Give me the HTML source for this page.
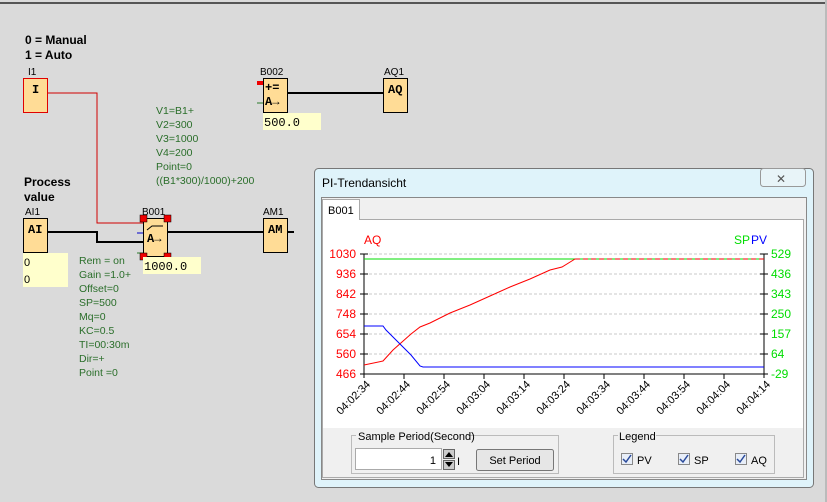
<!DOCTYPE html>
<html><head><style>
body{margin:0;width:827px;height:502px;overflow:hidden;background:#dadada;font-family:"Liberation Sans",sans-serif;}
svg{display:block}
</style></head><body>
<svg width="827" height="502" xmlns="http://www.w3.org/2000/svg" font-family="Liberation Sans, sans-serif">
<rect width="827" height="502" fill="#dadada"/>
<rect x="0" y="2" width="827" height="2" fill="#555"/>
<rect x="825" y="0" width="2" height="502" fill="#bbb"/>
<g font-weight="bold" font-size="12" fill="#000">
<text x="25" y="44">0 = Manual</text><text x="25" y="59">1 = Auto</text>
<text x="24" y="186">Process</text><text x="24" y="201">value</text>
</g>
<g font-size="10" fill="#000">
<text x="28" y="75">I1</text><text x="260" y="75">B002</text><text x="384" y="75">AQ1</text>
<text x="25" y="215">AI1</text><text x="142" y="215">B001</text><text x="263" y="215">AM1</text>
</g>
<polyline points="47,93 97,93 97,223 143,223" fill="none" stroke="#d00000" stroke-width="1"/>
<polyline points="47,232 97,232 97,242 143,242" fill="none" stroke="#000" stroke-width="2"/>
<line x1="167" y1="232" x2="263" y2="232" stroke="#000" stroke-width="2"/>
<line x1="287" y1="232" x2="294" y2="232" stroke="#000" stroke-width="2"/>
<line x1="287" y1="93" x2="383" y2="93" stroke="#000" stroke-width="2"/>
<line x1="257" y1="103" x2="263" y2="103" stroke="#2a7a2a"/>
<line x1="137" y1="233" x2="143" y2="233" stroke="#0000cc"/>
<line x1="137" y1="253" x2="143" y2="253" stroke="#2a7a2a"/>
<rect x="257" y="81" width="6" height="4" fill="#e00"/>
<g fill="#ffdc96" stroke="#000">
<rect x="23.5" y="78.5" width="24" height="34" stroke="#e00000"/>
<rect x="263.5" y="78.5" width="24" height="34"/>
<rect x="383.5" y="78.5" width="24" height="34"/>
<rect x="23.5" y="218.5" width="24" height="34"/>
<rect x="143.5" y="218.5" width="24" height="38"/>
<rect x="263.5" y="218.5" width="24" height="34"/>
</g>
<g fill="#e00" stroke="#000" stroke-width="0.5">
<rect x="140" y="215" width="7" height="7"/><rect x="164" y="215" width="7" height="7"/>
<rect x="140" y="253" width="7" height="7"/><rect x="164" y="253" width="7" height="7"/>
</g>
<g font-family="Liberation Mono, monospace" font-size="12" font-weight="bold" fill="#000">
<text x="32" y="93">I</text>
<text x="265" y="91">+=</text><text x="265" y="105">A→</text>
<text x="388" y="93">AQ</text>
<text x="28" y="233">AI</text>
<text x="147" y="242">A→</text>
<text x="268" y="233">AM</text>
</g>
<polyline points="147,230 152,226 158,226 163,226" fill="none" stroke="#000"/>
<g fill="#ffffcc"><rect x="263" y="113" width="58" height="17"/><rect x="23" y="253" width="45" height="34"/><rect x="143" y="257" width="58" height="17"/></g>
<g font-family="Liberation Mono, monospace" font-size="12" fill="#000">
<text x="264" y="126">500.0</text><text x="144" y="270">1000.0</text>
</g>
<g font-size="11" fill="#000"><text x="24" y="266">0</text><text x="24" y="283">0</text></g>
<g font-size="10.5" fill="#2a6e2a">
<text x="156" y="114">V1=B1+</text><text x="156" y="128">V2=300</text><text x="156" y="142">V3=1000</text>
<text x="156" y="156">V4=200</text><text x="156" y="170">Point=0</text><text x="156" y="184">((B1*300)/1000)+200</text>
<text x="79" y="264">Rem = on</text><text x="79" y="278">Gain  =1.0+</text><text x="79" y="292">Offset=0</text>
<text x="79" y="306">SP=500</text><text x="79" y="320">Mq=0</text><text x="79" y="334">KC=0.5</text>
<text x="79" y="348">TI=00:30m</text><text x="79" y="362">Dir=+</text><text x="79" y="376">Point =0</text>
</g>
<rect x="314.5" y="168.5" width="499" height="319" rx="4" fill="#dff3fa" stroke="#777"/>
<rect x="760.5" y="168.5" width="45" height="18" rx="3" fill="#e8f4f8" stroke="#999"/>
<text x="776" y="183" font-size="12" fill="#555">✕</text>
<text x="322" y="187" font-size="12" fill="#000">PI-Trendansicht</text>
<rect x="321.5" y="197.5" width="485" height="282" fill="#f0f0f0" stroke="#888"/>
<rect x="322.5" y="219.5" width="481" height="258" fill="#f0f0f0" stroke="#aaa"/>
<rect x="322.5" y="199.5" width="37" height="21" fill="#fff" stroke="#aaa"/>
<rect x="323" y="219" width="36" height="2" fill="#fff"/>
<text x="328" y="214" font-size="11" fill="#000">B001</text>
<rect x="323" y="220" width="480" height="208" fill="#fff"/>
<g stroke="#c8c8c8" stroke-dasharray="3,2">
<line x1="364" y1="254" x2="764" y2="254"/><line x1="364" y1="274" x2="764" y2="274"/>
<line x1="364" y1="294" x2="764" y2="294"/><line x1="364" y1="314" x2="764" y2="314"/>
<line x1="364" y1="334" x2="764" y2="334"/><line x1="364" y1="354" x2="764" y2="354"/>
</g>
<line x1="364" y1="254" x2="364" y2="378" stroke="#000"/>
<line x1="764" y1="254" x2="764" y2="378" stroke="#000"/>
<line x1="364" y1="374" x2="764" y2="374" stroke="#000"/>
<g stroke="#000">
<path d="M360 254h8M360 274h8M360 294h8M360 314h8M360 334h8M360 354h8M360 374h8M760 254h8M760 274h8M760 294h8M760 314h8M760 334h8M760 354h8M760 374h8"/>
<path d="M404 374v5M444 374v5M484 374v5M524 374v5M564 374v5M604 374v5M644 374v5M684 374v5M724 374v5"/>
</g>
<line x1="364" y1="259" x2="764" y2="259" stroke="#00dd00"/>
<line x1="575" y1="259" x2="764" y2="259" stroke="#e00" stroke-dasharray="5,3"/>
<polyline points="364,365 383,361 393,350 411,334 420,327 430,323 450,313 470,305 490,296 510,287 530,279 550,270 562,267 575,259" fill="none" stroke="#ff0000"/>
<polyline points="364,326 383,326 386,330 400,344 411,355 420,366 423,367 764,367" fill="none" stroke="#0000ff"/>
<g font-size="12" fill="#f00" text-anchor="end">
<text x="356" y="258">1030</text><text x="356" y="278">936</text><text x="356" y="298">842</text>
<text x="356" y="318">748</text><text x="356" y="338">654</text><text x="356" y="358">560</text><text x="356" y="378">466</text>
</g>
<text x="364" y="244" font-size="12" fill="#f00">AQ</text>
<g font-size="12" fill="#00dd00">
<text x="771" y="258">529</text><text x="771" y="278">436</text><text x="771" y="298">343</text>
<text x="771" y="318">250</text><text x="771" y="338">157</text><text x="771" y="358">64</text><text x="771" y="378">-29</text>
<text x="734" y="244">SP</text></g>
<text x="751" y="244" font-size="12" fill="#0000ff">PV</text>
<g font-size="11" fill="#000" text-anchor="end">
<text transform="translate(371,385) rotate(-45)">04:02:34</text>
<text transform="translate(411,385) rotate(-45)">04:02:44</text>
<text transform="translate(451,385) rotate(-45)">04:02:54</text>
<text transform="translate(491,385) rotate(-45)">04:03:04</text>
<text transform="translate(531,385) rotate(-45)">04:03:14</text>
<text transform="translate(571,385) rotate(-45)">04:03:24</text>
<text transform="translate(611,385) rotate(-45)">04:03:34</text>
<text transform="translate(651,385) rotate(-45)">04:03:44</text>
<text transform="translate(691,385) rotate(-45)">04:03:54</text>
<text transform="translate(731,385) rotate(-45)">04:04:04</text>
<text transform="translate(771,385) rotate(-45)">04:04:14</text>
</g>
<rect x="351.5" y="435.5" width="207" height="38" fill="none" stroke="#bbb"/>
<rect x="356" y="431" width="112" height="10" fill="#f0f0f0"/>
<text x="358" y="440" font-size="11" fill="#000">Sample Period(Second)</text>
<rect x="355.5" y="448.5" width="86" height="21" fill="#fff" stroke="#aaa"/>
<text x="436" y="464" font-size="11" text-anchor="end">1</text>
<rect x="443.5" y="449.5" width="11" height="9" fill="#ccc" stroke="#666"/><rect x="443.5" y="460.5" width="11" height="9" fill="#ccc" stroke="#666"/>
<path d="M445 457l4-5 4 5zM445 462l4 5 4-5z" fill="#000"/>
<text x="457" y="465" font-size="11">I</text>
<rect x="476.5" y="449.5" width="77" height="21" rx="2" fill="#e6e6e6" stroke="#777"/>
<text x="515" y="464" font-size="11" text-anchor="middle">Set Period</text>
<rect x="613.5" y="435.5" width="161" height="38" fill="none" stroke="#bbb"/>
<rect x="618" y="431" width="38" height="10" fill="#f0f0f0"/>
<text x="619" y="440" font-size="11">Legend</text>
<g fill="#e8eef8" stroke="#888">
<rect x="621.5" y="453.5" width="11" height="11"/><rect x="678.5" y="453.5" width="11" height="11"/><rect x="735.5" y="453.5" width="11" height="11"/>
</g>
<path d="M623 459l3 3 5-7M680 459l3 3 5-7M737 459l3 3 5-7" fill="none" stroke="#2a4a9a" stroke-width="1.5"/>
<g font-size="11"><text x="637" y="464">PV</text><text x="694" y="464">SP</text><text x="751" y="464">AQ</text></g>
</svg>
</body></html>
